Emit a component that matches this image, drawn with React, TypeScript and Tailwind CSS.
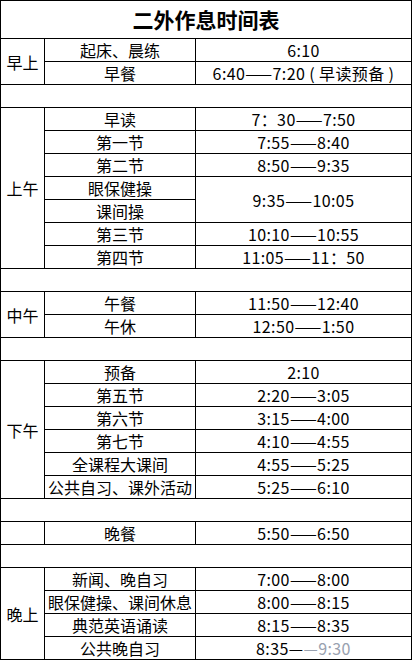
import React from "react";

const cell =
  "border-r border-b border-black flex items-center justify-center whitespace-nowrap overflow-hidden";
const tcell = `${cell} tracking-[0.4px]`;

function Blank() {
  return <div className={`${cell} col-span-3`} />;
}

export default function App() {
  return (
    <div className="bg-white w-[414px] h-[661px]">
      <div
        className="w-[412px] border-l border-t border-black text-black text-[16px] leading-none"
        style={{ fontFamily: '"Noto Sans CJK SC", "Noto Sans", sans-serif' }}
      >
        <div className="h-[38px] border-r border-b border-black flex items-center justify-center text-[21px] font-bold">
          二外作息时间表
        </div>
        <div className="grid grid-cols-[44px_151px_216px] auto-rows-[23px]">
          <div className={`${cell} row-span-2`}>早上</div>
          <div className={cell}>起床、晨练</div>
          <div className={tcell}>6:10</div>
          <div className={cell}>早餐</div>
          <div className={tcell}>6:40——7:20 ( 早读预备 )</div>

          <Blank />

          <div className={`${cell} row-span-7`}>上午</div>
          <div className={cell}>早读</div>
          <div className={tcell}>7：30——7:50</div>
          <div className={cell}>第一节</div>
          <div className={tcell}>7:55——8:40</div>
          <div className={cell}>第二节</div>
          <div className={tcell}>8:50——9:35</div>
          <div className={cell}>眼保健操</div>
          <div className={`${tcell} row-span-2`}>9:35——10:05</div>
          <div className={cell}>课间操</div>
          <div className={cell}>第三节</div>
          <div className={tcell}>10:10——10:55</div>
          <div className={cell}>第四节</div>
          <div className={tcell}>11:05——11：50</div>

          <Blank />

          <div className={`${cell} row-span-2`}>中午</div>
          <div className={cell}>午餐</div>
          <div className={tcell}>11:50——12:40</div>
          <div className={cell}>午休</div>
          <div className={tcell}>12:50——1:50</div>

          <Blank />

          <div className={`${cell} row-span-6`}>下午</div>
          <div className={cell}>预备</div>
          <div className={tcell}>2:10</div>
          <div className={cell}>第五节</div>
          <div className={tcell}>2:20——3:05</div>
          <div className={cell}>第六节</div>
          <div className={tcell}>3:15——4:00</div>
          <div className={cell}>第七节</div>
          <div className={tcell}>4:10——4:55</div>
          <div className={cell}>全课程大课间</div>
          <div className={tcell}>4:55——5:25</div>
          <div className={cell}>公共自习、课外活动</div>
          <div className={tcell}>5:25——6:10</div>

          <Blank />

          <div className={cell} />
          <div className={cell}>晚餐</div>
          <div className={tcell}>5:50——6:50</div>

          <Blank />

          <div className={`${cell} row-span-4`}>晚上</div>
          <div className={cell}>新闻、晚自习</div>
          <div className={tcell}>7:00——8:00</div>
          <div className={cell}>眼保健操、课间休息</div>
          <div className={tcell}>8:00——8:15</div>
          <div className={cell}>典范英语诵读</div>
          <div className={tcell}>8:15——8:35</div>
          <div className={cell}>公共晚自习</div>
          <div className={tcell}>
            <span>8:35—</span>
            <span className="text-gray-400">—9:30</span>
          </div>
        </div>
      </div>
    </div>
  );
}
